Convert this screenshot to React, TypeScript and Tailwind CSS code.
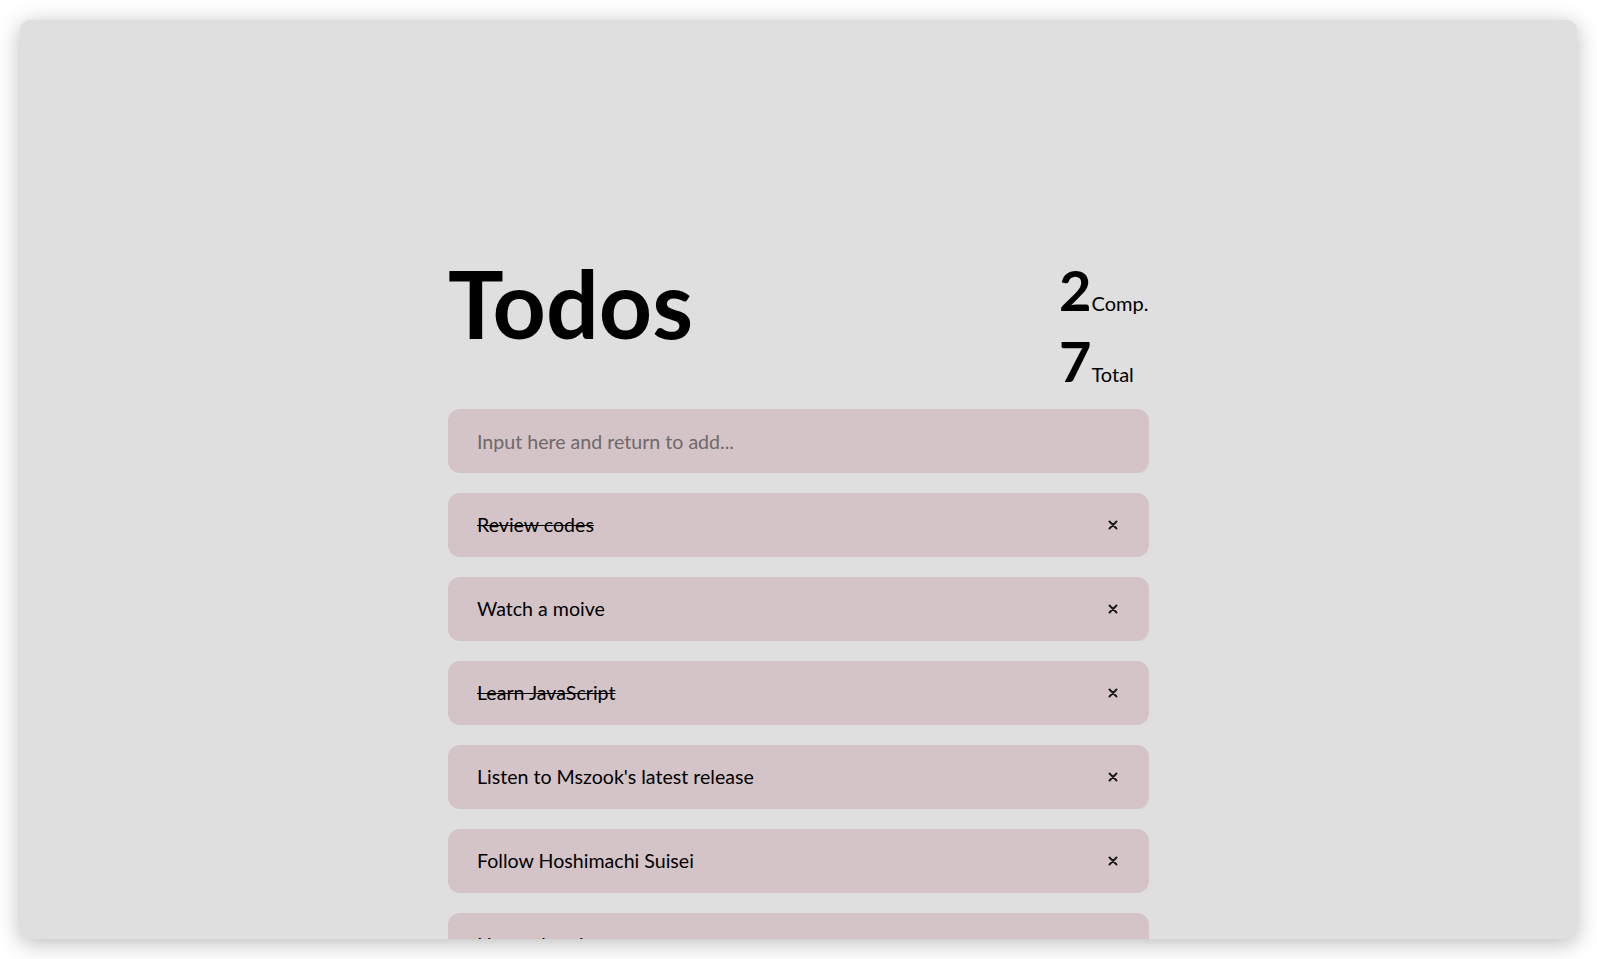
import { useState } from "react";

type Todo = { id: number; text: string; done: boolean };

const initialTodos: Todo[] = [
  { id: 1, text: "Review codes", done: true },
  { id: 2, text: "Watch a moive", done: false },
  { id: 3, text: "Learn JavaScript", done: true },
  { id: 4, text: "Listen to Mszook's latest release", done: false },
  { id: 5, text: "Follow Hoshimachi Suisei", done: false },
  { id: 6, text: "Have a break", done: false },
  { id: 7, text: "Go to bed early", done: false },
];

function CloseIcon() {
  return (
    <svg width="10" height="10" viewBox="0 0 10 10" fill="none">
      <path d="M1.5 1.5L8.5 8.5M8.5 1.5L1.5 8.5" stroke="#1a1a1a" strokeWidth="2" strokeLinecap="round" />
    </svg>
  );
}

function Stat({ value, label }: { value: number; label: string }) {
  return (
    <div className="flex h-[71px] items-baseline leading-[71px]">
      <span className="text-[56px] font-bold text-black">{value}</span>
      <span className="text-[20px] text-black">{label}</span>
    </div>
  );
}

export default function App() {
  const [todos, setTodos] = useState<Todo[]>(initialTodos);
  const [draft, setDraft] = useState("");

  const completed = todos.filter((t) => t.done).length;

  return (
    <div className="h-screen w-full bg-white p-5" style={{ fontFamily: "Lato, 'Noto Sans', sans-serif" }}>
      <div className="h-full w-full overflow-hidden rounded-[10px] bg-[#dfdfdf] shadow-[0_4px_22px_rgba(0,0,0,0.28)]">
        <div className="mx-auto w-[701px] pt-[234px]">
          <header className="flex items-start justify-between">
            <h1 className="mt-[3px] text-[93px] font-bold leading-none text-black">Todos</h1>
            <div className="w-[90px]">
              <Stat value={completed} label="Comp." />
              <Stat value={todos.length} label="Total" />
            </div>
          </header>

          <form
            className="mt-[13px]"
            onSubmit={(e) => {
              e.preventDefault();
              if (!draft.trim()) return;
              setTodos([...todos, { id: Date.now(), text: draft.trim(), done: false }]);
              setDraft("");
            }}
          >
            <input
              value={draft}
              onChange={(e) => setDraft(e.target.value)}
              placeholder="Input here and return to add..."
              className="h-16 w-full rounded-xl bg-[#d4c4c7] px-[29px] text-[19.6px] text-black outline-none placeholder:text-[#6e696a]"
            />
          </form>

          <ul className="mt-5 flex flex-col gap-5">
            {todos.map((t) => (
              <li
                key={t.id}
                onClick={() => setTodos(todos.map((x) => (x.id === t.id ? { ...x, done: !x.done } : x)))}
                className="flex h-16 cursor-pointer items-center justify-between rounded-xl bg-[#d4c4c7] pl-[29px] pr-[31px]"
              >
                <span className={t.done ? "text-[19.6px] text-black line-through" : "text-[19.6px] text-black"}>
                  {t.text}
                </span>
                <button
                  onClick={(e) => {
                    e.stopPropagation();
                    setTodos(todos.filter((x) => x.id !== t.id));
                  }}
                  className="flex h-4 w-[10px] items-center justify-center"
                >
                  <CloseIcon />
                </button>
              </li>
            ))}
          </ul>
        </div>
      </div>
    </div>
  );
}
